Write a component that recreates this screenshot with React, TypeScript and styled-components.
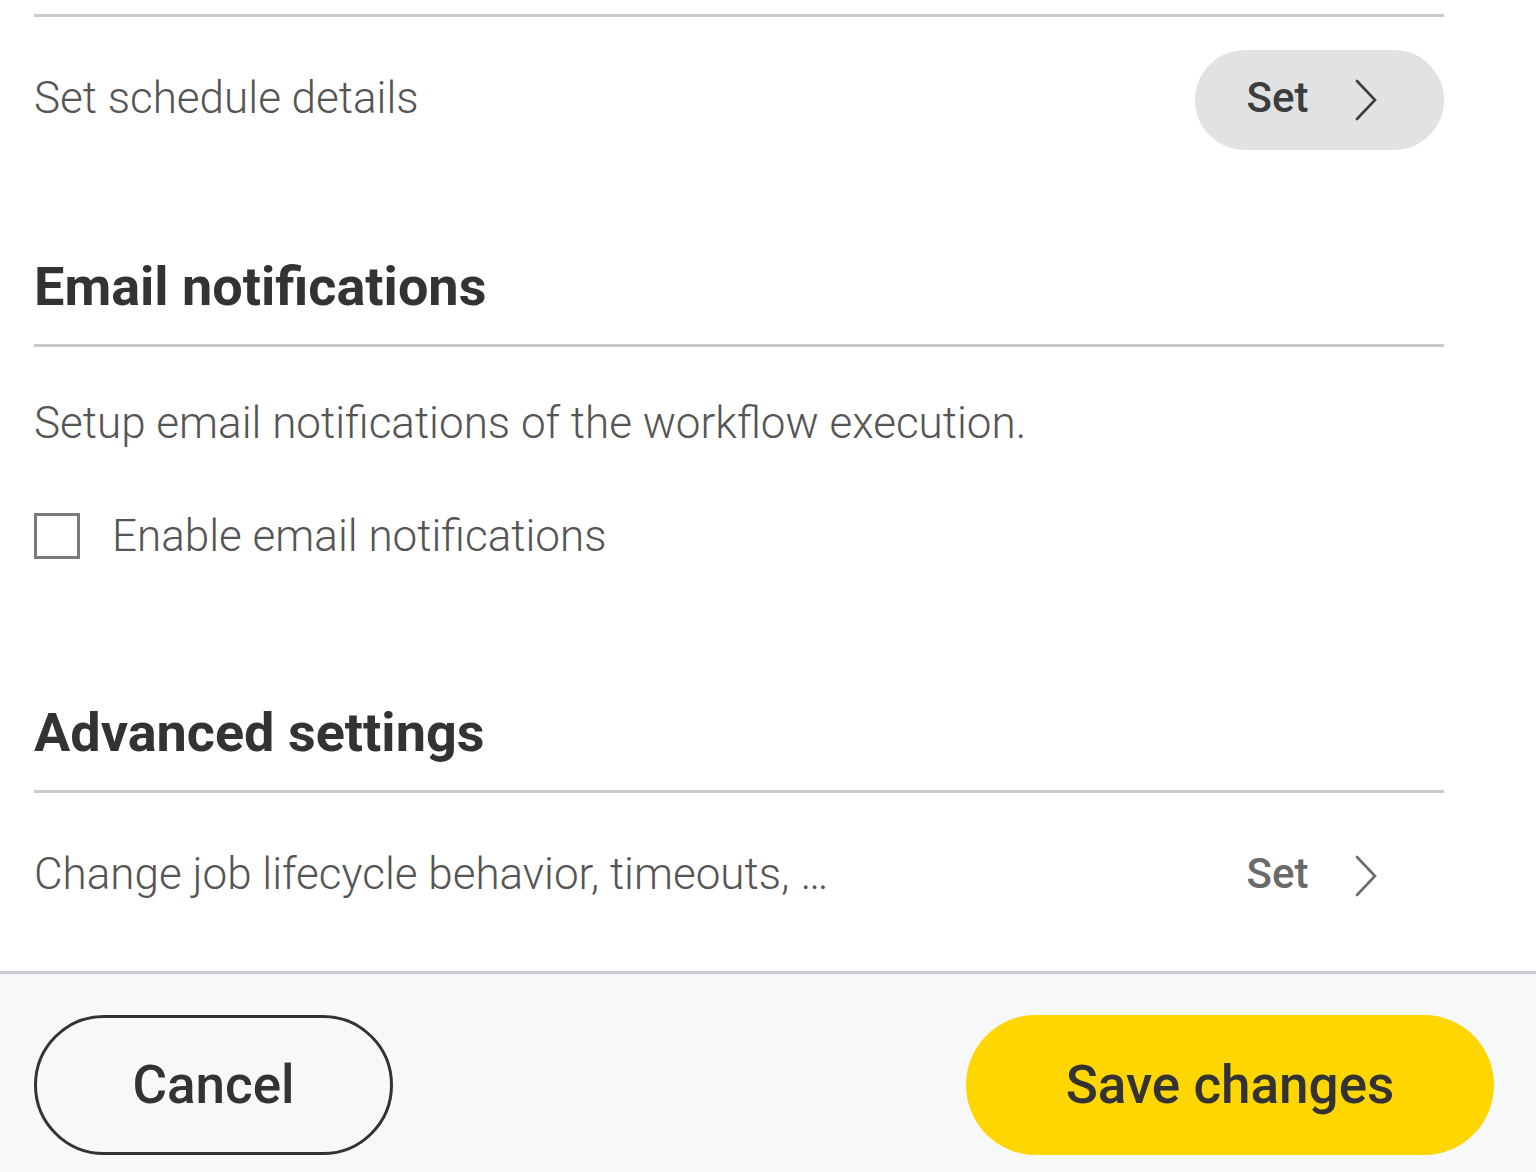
import React, {useState} from 'react';
import styled, {createGlobalStyle} from 'styled-components';

const GlobalStyle = createGlobalStyle`
  html, body {
    margin: 0;
    padding: 0;
    background: #ffffff;
  }
  body {
    font-family: Roboto, "Liberation Sans", sans-serif;
    color: #333333;
  }
  * {
    box-sizing: border-box;
  }
`;

const Page = styled.div`
  display: flex;
  flex-direction: column;
  min-height: 1172px;
`;

const Body = styled.main`
  flex: 1;
  padding: 14px 92px 44px 34px;
`;

const Divider = styled.hr`
  margin: 0;
  border: none;
  border-top: 3px solid #c9cacb;
`;

const Row = styled.div`
  display: flex;
  align-items: center;
  justify-content: space-between;
  padding-top: 33px;
`;

const RowText = styled.span`
  padding-bottom: 5px;
  font-size: 44px;
  font-weight: 300;
  color: #555555;
`;

const SetButton = styled.button<{ $filled?: boolean }>`
  display: inline-flex;
  align-items: center;
  gap: 44px;
  height: 100px;
  width: 249px;
  padding: 0 62px 0 50px;
  justify-content: center;
  border: none;
  border-radius: 50px;
  background: ${p => (p.$filled ? '#e1e2e4' : 'transparent')};
  color: ${p => (p.$filled ? '#3d3d3d' : '#6a6a6a')};
  font-family: inherit;
  font-size: 42px;
  font-weight: 500;
  cursor: pointer;

  svg {
    width: 28px;
    height: 44px;
  }
`;

const SetLabel = styled.span`
  padding-bottom: 5px;
`;

const Section = styled.section<{ $gap: number }>`
  margin-top: ${p => p.$gap}px;
`;

const Heading = styled.h2`
  margin: 0 0 25px;
  font-size: 54px;
  line-height: 64px;
  font-weight: 700;
  color: #333333;
`;

const Description = styled.p`
  margin: 51px 0 0;
  font-size: 44px;
  line-height: 50px;
  font-weight: 300;
  color: #555555;
`;

const CheckLabel = styled.label`
  display: flex;
  align-items: center;
  gap: 32px;
  margin-top: 63px;
  font-size: 44px;
  line-height: 50px;
  font-weight: 300;
  color: #555555;
  cursor: pointer;
`;

const CheckBox = styled.span<{ $checked: boolean }>`
  display: inline-flex;
  align-items: center;
  justify-content: center;
  width: 46px;
  height: 46px;
  border: 3px solid #7a7a7a;
  background: ${p => (p.$checked ? '#7a7a7a' : '#ffffff')};
  color: #ffffff;
  font-size: 32px;
`;

const Footer = styled.footer`
  display: flex;
  justify-content: space-between;
  align-items: flex-start;
  height: 201px;
  padding: 41px 42px 0 34px;
  border-top: 3px solid #c9cdd1;
  background: #f6f8fa;
`;

const FooterButton = styled.button<{ $primary?: boolean }>`
  height: 140px;
  width: ${p => (p.$primary ? '528px' : '359px')};
  border-radius: 70px;
  border: ${p => (p.$primary ? 'none' : '3px solid #333333')};
  background: ${p => (p.$primary ? '#ffd600' : 'transparent')};
  color: #333333;
  font-family: inherit;
  font-size: 53px;
  font-weight: 500;
  cursor: pointer;
`;

const Chevron = () => (
    <svg viewBox="0 0 28 44" fill="none" stroke="currentColor" strokeWidth="2.6" strokeLinecap="round">
        <path d="M5 3 L23 22 L5 41"/>
    </svg>
);

const App: React.FC = () => {
    const [emailEnabled, setEmailEnabled] = useState(false);

    return (
        <Page>
            <GlobalStyle/>
            <Body>
                <Divider/>
                <Row>
                    <RowText>Set schedule details</RowText>
                    <SetButton $filled>
                        <SetLabel>Set</SetLabel>
                        <Chevron/>
                    </SetButton>
                </Row>

                <Section $gap={105}>
                    <Heading>Email notifications</Heading>
                    <Divider/>
                    <Description>Setup email notifications of the workflow execution.</Description>
                    <CheckLabel onClick={() => setEmailEnabled(v => !v)}>
                        <CheckBox $checked={emailEnabled}>{emailEnabled ? '✓' : ''}</CheckBox>
                        Enable email notifications
                    </CheckLabel>
                </Section>

                <Section $gap={140}>
                    <Heading>Advanced settings</Heading>
                    <Divider/>
                    <Row>
                        <RowText>Change job lifecycle behavior, timeouts, …</RowText>
                        <SetButton>
                            <SetLabel>Set</SetLabel>
                            <Chevron/>
                        </SetButton>
                    </Row>
                </Section>
            </Body>
            <Footer>
                <FooterButton>Cancel</FooterButton>
                <FooterButton $primary>Save changes</FooterButton>
            </Footer>
        </Page>
    );
};

export default App;
